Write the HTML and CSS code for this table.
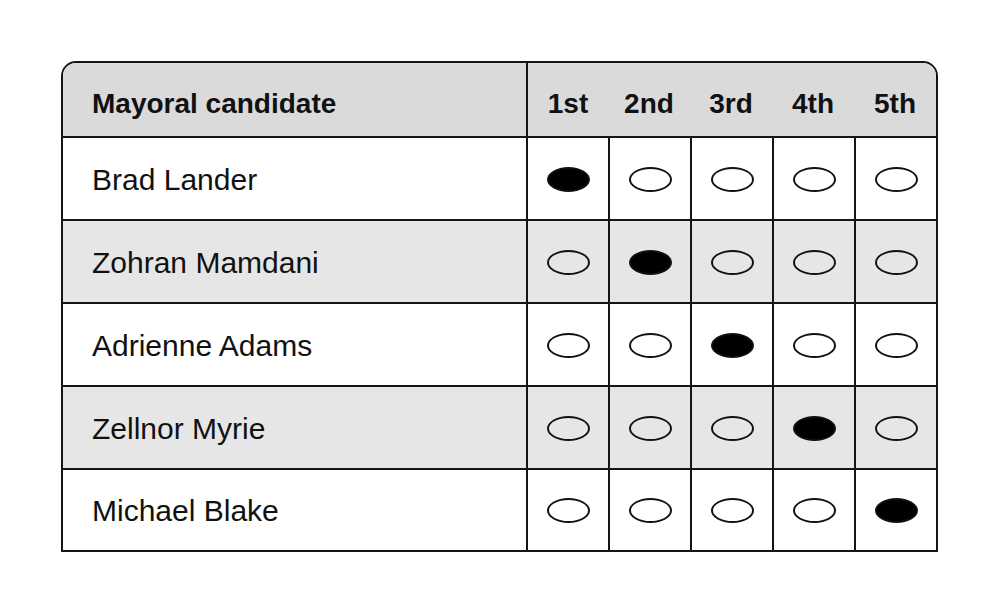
FILE: index.html
```html
<!DOCTYPE html>
<html lang="en">
<head>
<meta charset="utf-8">
<title>Mayoral ballot</title>
<link rel="stylesheet" href="styles.css">
</head>
<body>
<div class="ballot">
  <div class="row head">
    <div class="name">Mayoral candidate</div>
    <div class="rank first">1st</div>
    <div class="rank">2nd</div>
    <div class="rank">3rd</div>
    <div class="rank">4th</div>
    <div class="rank">5th</div>
  </div>
  <div class="row">
    <div class="name">Brad Lander</div>
    <div class="cell"><span class="oval on"></span></div>
    <div class="cell"><span class="oval"></span></div>
    <div class="cell"><span class="oval"></span></div>
    <div class="cell"><span class="oval"></span></div>
    <div class="cell"><span class="oval"></span></div>
  </div>
  <div class="row shaded">
    <div class="name">Zohran Mamdani</div>
    <div class="cell"><span class="oval"></span></div>
    <div class="cell"><span class="oval on"></span></div>
    <div class="cell"><span class="oval"></span></div>
    <div class="cell"><span class="oval"></span></div>
    <div class="cell"><span class="oval"></span></div>
  </div>
  <div class="row">
    <div class="name">Adrienne Adams</div>
    <div class="cell"><span class="oval"></span></div>
    <div class="cell"><span class="oval"></span></div>
    <div class="cell"><span class="oval on"></span></div>
    <div class="cell"><span class="oval"></span></div>
    <div class="cell"><span class="oval"></span></div>
  </div>
  <div class="row shaded">
    <div class="name">Zellnor Myrie</div>
    <div class="cell"><span class="oval"></span></div>
    <div class="cell"><span class="oval"></span></div>
    <div class="cell"><span class="oval"></span></div>
    <div class="cell"><span class="oval on"></span></div>
    <div class="cell"><span class="oval"></span></div>
  </div>
  <div class="row last">
    <div class="name">Michael Blake</div>
    <div class="cell"><span class="oval"></span></div>
    <div class="cell"><span class="oval"></span></div>
    <div class="cell"><span class="oval"></span></div>
    <div class="cell"><span class="oval"></span></div>
    <div class="cell"><span class="oval on"></span></div>
  </div>
</div>
</body>
</html>
```

FILE: styles.css
```css
* { box-sizing: border-box; }
html, body { margin: 0; padding: 0; background: #fff; }
body {
  font-family: "Liberation Sans", Arial, sans-serif;
  color: #111;
  padding: 61px 0 0 61px;
}
.ballot {
  width: 877px;
  border: 2px solid #151515;
  border-radius: 15px 15px 0 0;
  overflow: hidden;
  background: #fff;
}
.row {
  display: grid;
  grid-template-columns: 1fr repeat(5, 82px);
  height: 83px;
  border-top: 2px solid #151515;
}
.row.last { height: 82px; }
.row.head {
  height: 73px;
  border-top: none;
  background: #dadada;
}
.row.shaded { background: #e6e6e6; }
.name {
  display: flex;
  align-items: center;
  padding-left: 29px;
  padding-top: 2px;
  font-size: 30px;
}
.head .name, .rank {
  font-weight: bold;
  font-size: 28px;
  padding-top: 9px;
}
.rank {
  display: flex;
  align-items: center;
  justify-content: center;
}
.rank.first { border-left: 2px solid #151515; }
.cell {
  display: flex;
  align-items: center;
  justify-content: center;
  border-left: 2px solid #151515;
  padding-top: 1px;
}
.oval {
  display: block;
  width: 43px;
  height: 25px;
  border: 2px solid #111;
  border-radius: 50%;
}
.oval.on { background: #000; }
```
